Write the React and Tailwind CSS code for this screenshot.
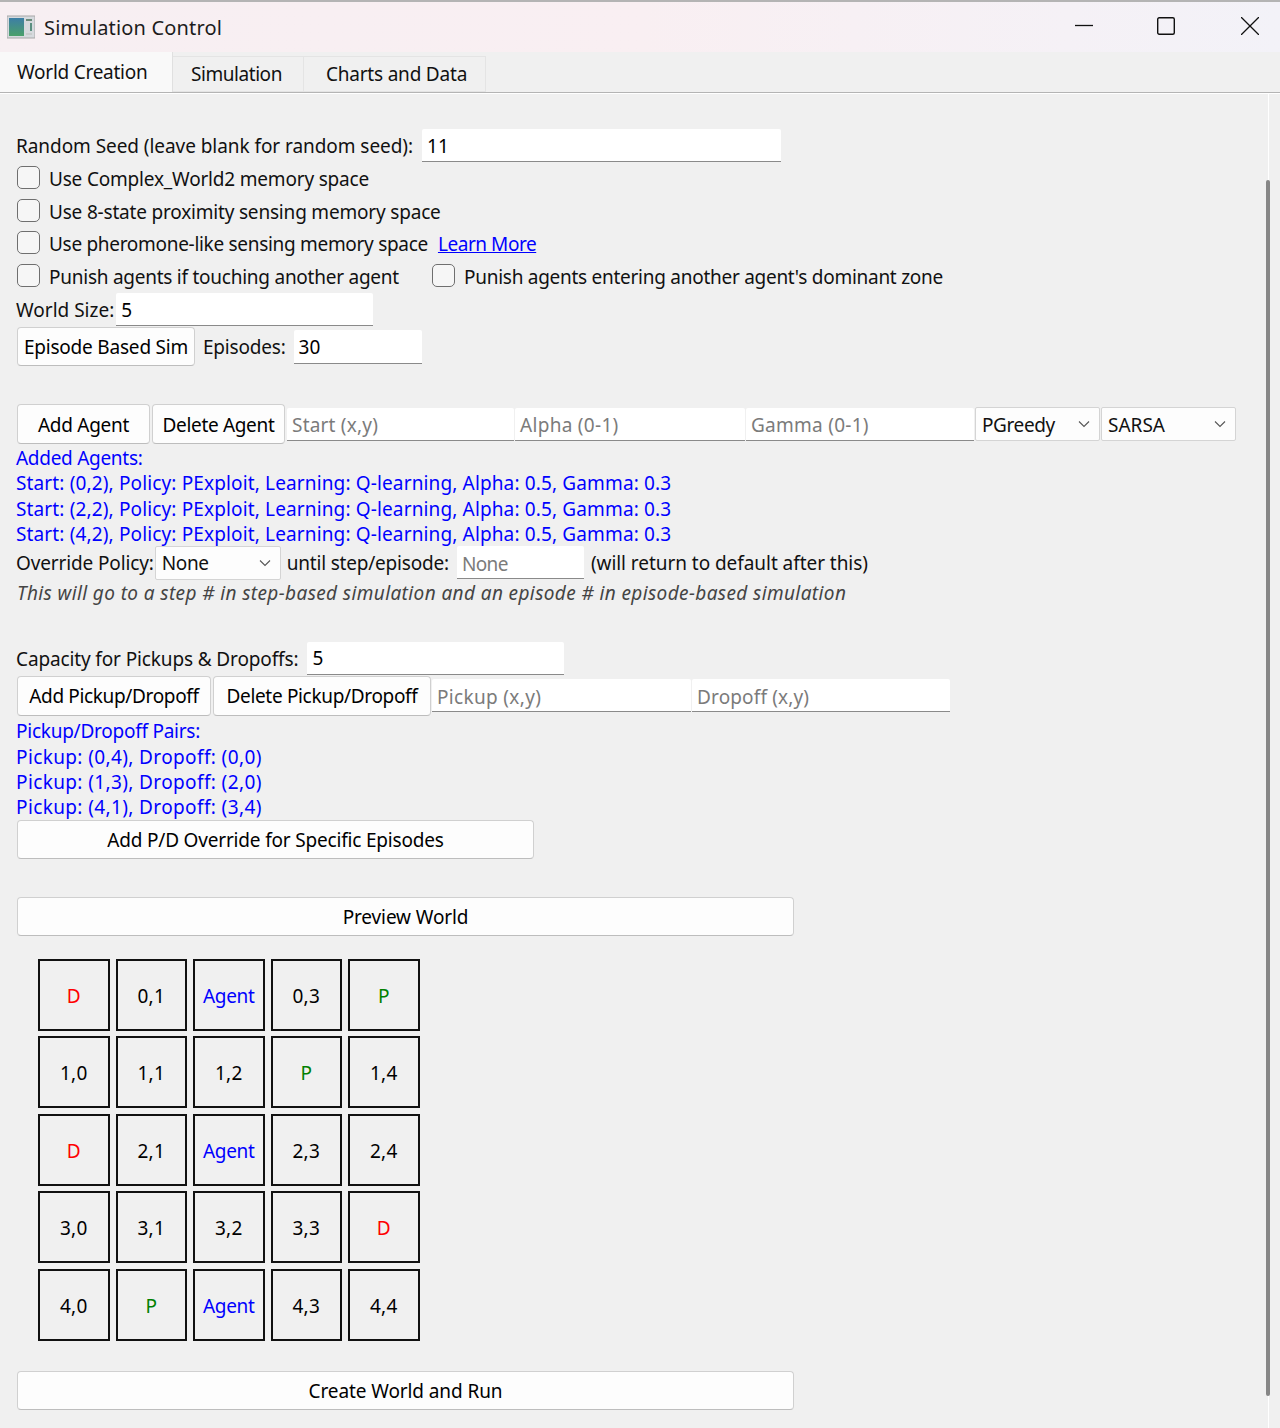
import React from "react";

const F = { fontFamily: '"Noto Sans", sans-serif' };

function Btn({ className = "", text = "", children }) {
  return (
    <div className={"flex items-center justify-center shrink-0 bg-[#fdfdfd] border border-[#d0d0d0] border-b-[#bdbdbd] rounded-[4px] text-black " + className}>
      <span className={"pt-[2px] " + text}>{children}</span>
    </div>
  );
}

function Input({ className = "", text = "", value, placeholder }) {
  return (
    <div className={"flex items-center shrink-0 bg-white border-b border-[#8a8a8a] rounded-t-[2px] px-[5px] " + className}>
      {value ? <span className={"pt-[2px] text-black " + text}>{value}</span> : <span className={"pt-[4px] text-[#7b7b7b] " + text}>{placeholder}</span>}
    </div>
  );
}

function Check({ label, text = "" }) {
  return (
    <div className="flex items-center gap-[9px] shrink-0 h-[23px]">
      <div className="w-[23px] h-[23px] bg-[#f6f6f6] border border-[#6f6f6f] rounded-[5px]" />
      <span className={"pt-[4px] " + text}>{label}</span>
    </div>
  );
}

function Combo({ className = "", text = "", value }) {
  return (
    <div className={"flex items-center justify-between shrink-0 bg-[#fdfdfd] border border-[#d4d4d4] rounded-[2px] pl-[6px] pr-[9px] " + className}>
      <span className={"pt-[2px] " + text}>{value}</span>
      <svg width="12" height="8" viewBox="0 0 12 8" fill="none" stroke="#555" strokeWidth="1.1"><path d="M1 1.5 L6 6.5 L11 1.5" /></svg>
    </div>
  );
}

const cells = [
  ["D", "0,1", "Agent", "0,3", "P"],
  ["1,0", "1,1", "1,2", "P", "1,4"],
  ["D", "2,1", "Agent", "2,3", "2,4"],
  ["3,0", "3,1", "3,2", "3,3", "D"],
  ["4,0", "P", "Agent", "4,3", "4,4"],
];

function cellColor(t) {
  if (t === "D") return "text-[#ff0000]";
  if (t === "P") return "text-[#008000]";
  if (t === "Agent") return "text-[#0000ff] tracking-[-0.3px]";
  return "text-black tracking-[0.3px]";
}

const agents = [
  "Start: (0,2), Policy: PExploit, Learning: Q-learning, Alpha: 0.5, Gamma: 0.3",
  "Start: (2,2), Policy: PExploit, Learning: Q-learning, Alpha: 0.5, Gamma: 0.3",
  "Start: (4,2), Policy: PExploit, Learning: Q-learning, Alpha: 0.5, Gamma: 0.3",
];
const pairs = [
  "Pickup: (0,4), Dropoff: (0,0)",
  "Pickup: (1,3), Dropoff: (2,0)",
  "Pickup: (4,1), Dropoff: (3,4)",
];

export default function App() {
  return (
    <div style={F} className="relative w-[1280px] h-[1428px] overflow-hidden bg-[#f0f0f0] text-[19px] leading-[25px] text-[#111]">
      {/* title bar */}
      <div className="flex items-center justify-between h-[52px] border-t-2 border-[#b4b4b4] bg-gradient-to-r from-[#f7eff2] via-[#f9eff2] to-[#f3f2f8]">
        <div className="flex items-center gap-[9px] pl-[7px]">
          <svg width="28" height="24" viewBox="0 0 28 24">
            <rect x="0" y="1" width="28" height="22" fill="#d6dade" stroke="#a8a8a8" />
            <defs>
              <linearGradient id="g" x1="0" y1="0" x2="0" y2="1">
                <stop offset="0" stopColor="#3d7ea6" />
                <stop offset="1" stopColor="#4aa06a" />
              </linearGradient>
            </defs>
            <rect x="2" y="3" width="15" height="18" fill="url(#g)" />
            <rect x="19" y="4" width="6" height="2" fill="#6a8a7a" />
            <rect x="23" y="8" width="2" height="8" fill="#5a8f80" />
            <rect x="19" y="18" width="6" height="2" fill="#c8cccc" />
          </svg>
          <span className="text-[20px] text-[#1c1c1c] tracking-[0.17px]">Simulation Control</span>
        </div>
        <div className="flex items-center pr-[21px] pb-[3px]">
          <svg width="18" height="18" viewBox="0 0 18 18" stroke="#111" strokeWidth="1.3" fill="none"><path d="M0 8.5 H18" /></svg>
          <svg className="ml-[64px]" width="18" height="18" viewBox="0 0 18 18" stroke="#111" strokeWidth="1.4" fill="none"><rect x="0.7" y="0.7" width="16.6" height="16.6" rx="1.5" /></svg>
          <svg className="ml-[66px]" width="18" height="18" viewBox="0 0 18 18" stroke="#111" strokeWidth="1.3" fill="none"><path d="M0 0 L18 18 M18 0 L0 18" /></svg>
        </div>
      </div>

      {/* tabs */}
      <div className="flex items-end h-[40px]">
        <div className="flex items-center h-[40px] w-[173px] pl-[17px] bg-[#f9f9f9] border-r border-[#e0e0e0] tracking-[-0.25px]">World Creation</div>
        <div className="flex items-center justify-center h-[36px] w-[131px] border-t border-r border-b border-[#e4e4e4] pr-[3px] tracking-[-0.45px]">Simulation</div>
        <div className="flex items-center justify-center h-[36px] w-[182px] border-t border-r border-b border-[#e4e4e4] pl-[4px] tracking-[-0.2px]">Charts and Data</div>
      </div>
      <div className="h-[1px] bg-[#b4b4b4] border-b border-white box-content" />

      {/* body */}
      <div className="flex flex-col pl-[16px] pt-[35px] w-[1252px] h-[1334px] border-r border-white box-content">
        <div className="flex items-center h-[33px] gap-[9px]">
          <span className="pt-[2px] tracking-[-0.06px]">Random Seed (leave blank for random seed):</span>
          <Input className="w-[359px] h-[33px]" value="11" />
        </div>
        <div className="pl-[1px] mt-[4px] flex flex-col gap-[9.5px]">
          <Check label="Use Complex_World2 memory space" text="tracking-[-0.19px]" />
          <Check label="Use 8-state proximity sensing memory space" text="tracking-[-0.19px]" />
          <div className="flex items-center gap-[10px] h-[23px]">
            <Check label="Use pheromone-like sensing memory space" text="tracking-[-0.3px]" />
            <span className="pt-[4px] text-[#0000ff] underline tracking-[-0.45px]">Learn More</span>
          </div>
          <div className="flex items-center h-[23px]">
            <div className="w-[415px]"><Check label="Punish agents if touching another agent" text="tracking-[-0.25px]" /></div>
            <Check label="Punish agents entering another agent's dominant zone" text="tracking-[-0.27px]" />
          </div>
        </div>
        <div className="flex items-center h-[33px] mt-[6.5px] gap-[2px]">
          <span className="pt-[2px]">World Size:</span>
          <Input className="w-[257px] h-[33px]" value="5" />
        </div>
        <div className="flex items-center h-[39px] mt-[1px] pl-[1px]">
          <Btn className="w-[178px] h-[39px]" text="tracking-[-0.2px]">Episode Based Sim</Btn>
          <span className="pt-[2px] ml-[8px] tracking-[-0.2px]">Episodes:</span>
          <Input className="ml-[8px] w-[128px] h-[34px]" value="30" />
        </div>

        <div className="flex items-center h-[40px] mt-[38px] pl-[1px]">
          <Btn className="w-[133px] h-[40px]" text="tracking-[-0.28px]">Add Agent</Btn>
          <Btn className="ml-[2px] w-[133px] h-[40px]" text="tracking-[-0.33px]">Delete Agent</Btn>
          <Input className="ml-[2px] w-[227px] h-[33px]" text="tracking-[0.2px]" placeholder="Start (x,y)" />
          <Input className="ml-[1px] w-[230px] h-[33px]" text="tracking-[0.3px]" placeholder="Alpha (0-1)" />
          <Input className="ml-[1px] w-[228px] h-[33px]" text="tracking-[0.27px]" placeholder="Gamma (0-1)" />
          <Combo className="ml-[1px] w-[125px] h-[34px]" text="tracking-[-0.4px]" value="PGreedy" />
          <Combo className="ml-[1px] w-[135px] h-[34px]" value="SARSA" />
        </div>
        <div className="text-[#0000ff] mt-[1.9px]">
          <div className="tracking-[-0.28px]">Added Agents:</div>
          {agents.map((a, i) => <div key={i} className="h-[25px] mt-[0.4px] tracking-[0.14px]">{a}</div>)}
        </div>
        <div className="flex items-center h-[34px] mt-[-1.1px]">
          <span className="pt-[2px] tracking-[-0.13px]">Override Policy:</span>
          <Combo className="ml-[1px] w-[126px] h-[34px]" text="tracking-[-0.4px]" value="None" />
          <span className="pt-[2px] ml-[6px] tracking-[-0.2px]">until step/episode:</span>
          <Input className="ml-[8px] w-[127px] h-[33px]" text="tracking-[-0.6px]" placeholder="None" />
          <span className="pt-[2px] ml-[7px] tracking-[-0.05px]">(will return to default after this)</span>
        </div>
        <div className="italic text-[#444] mt-[1px] ml-[1px] tracking-[0.39px]">This will go to a step # in step-based simulation and an episode # in episode-based simulation</div>

        <div className="flex items-center h-[33px] mt-[36px]">
          <span className="pt-[2px] tracking-[-0.13px]">Capacity for Pickups &amp; Dropoffs:</span>
          <Input className="ml-[9px] w-[257px] h-[33px]" value="5" />
        </div>
        <div className="flex items-center h-[40px] mt-[1px] pl-[1px]">
          <Btn className="w-[194px] h-[40px]" text="tracking-[-0.35px]">Add Pickup/Dropoff</Btn>
          <Btn className="ml-[2px] w-[218px] h-[40px]" text="tracking-[-0.33px]">Delete Pickup/Dropoff</Btn>
          <Input className="ml-[1px] w-[259px] h-[33px]" text="tracking-[0.33px]" placeholder="Pickup (x,y)" />
          <Input className="ml-[1px] w-[258px] h-[33px]" text="tracking-[0.15px]" placeholder="Dropoff (x,y)" />
        </div>
        <div className="text-[#0000ff] mt-[3.2px]">
          <div className="tracking-[-0.25px]">Pickup/Dropoff Pairs:</div>
          {pairs.map((p, i) => <div key={i} className="h-[25px] mt-[0.4px] tracking-[0.38px]">{p}</div>)}
        </div>
        <div className="pl-[1px] mt-[-0.4px]">
          <Btn className="w-[517px] h-[39px]" text="tracking-[-0.18px]">Add P/D Override for Specific Episodes</Btn>
        </div>
        <div className="pl-[1px] mt-[38px]">
          <Btn className="w-[777px] h-[39px]" text="tracking-[-0.12px]">Preview World</Btn>
        </div>

        <div className="grid grid-cols-[repeat(5,71.5px)] auto-rows-[72px] gap-x-[6px] gap-y-[5.4px] pl-[22px] mt-[23px]">
          {cells.flat().map((t, i) => (
            <div key={i} className={"flex items-center justify-center border-2 border-[#111] pt-[3px] " + cellColor(t)}>{t}</div>
          ))}
        </div>

        <div className="pl-[1px] mt-[30px]">
          <Btn className="w-[777px] h-[39px]" text="tracking-[-0.1px]">Create World and Run</Btn>
        </div>
      </div>

      {/* scrollbar overlays the side gutter */}
      <div className="absolute left-[1266px] top-[180px] w-[4px] h-[1216px] bg-[#868686] rounded-full" />
    </div>
  );
}
